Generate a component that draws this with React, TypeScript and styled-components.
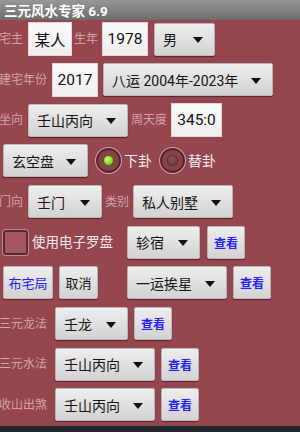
import React from "react";
import styled, { createGlobalStyle } from "styled-components";

const GlobalStyle = createGlobalStyle`
  html, body {
    margin: 0;
    padding: 0;
    background: #23272b;
  }
  * {
    box-sizing: border-box;
  }
`;

const FONT = `"Roboto", "Noto Sans CJK SC", sans-serif`;

const Page = styled.div`
  width: 300px;
  height: 432px;
  display: flex;
  flex-direction: column;
  overflow: hidden;
  background: #96464f;
  font-family: ${FONT};
`;

const TitleBar = styled.div`
  height: 20px;
  flex: none;
  display: flex;
  align-items: center;
  padding-left: 4px;
  background: linear-gradient(#979797, #6c6c6c);
  color: #ffffff;
  font-size: 13.5px;
  font-weight: bold;
  white-space: nowrap;
`;

const Content = styled.div`
  flex: 1;
  display: flex;
  flex-direction: column;
  gap: 6.67px;
  padding-top: 2px;
`;

const BottomBar = styled.div`
  height: 6px;
  flex: none;
  background: #23272b;
`;

const Row = styled.div`
  display: flex;
  align-items: center;
  height: 34px;
  white-space: nowrap;
`;

const Label = styled.span<{ $ml?: number }>`
  margin-left: ${(p) => p.$ml ?? 0}px;
  color: #d3a2aa;
  font-size: 12px;
  line-height: 16px;
`;

const WhiteText = styled.span<{ $ml?: number; $size?: number }>`
  margin-left: ${(p) => p.$ml ?? 0}px;
  color: #f4eaec;
  font-size: ${(p) => p.$size ?? 14}px;
  line-height: 16px;
`;

const Edit = styled.div<{ $w: number; $ml?: number }>`
  width: ${(p) => p.$w}px;
  height: 34px;
  margin-left: ${(p) => p.$ml ?? 0}px;
  display: flex;
  align-items: center;
  justify-content: center;
  background: linear-gradient(#fbfafa, #efeded);
  border: 1px solid #e2d6d8;
  color: #111;
  font-size: 15.5px;
`;

const Spinner = styled.div<{ $w: number; $ml?: number }>`
  width: ${(p) => p.$w}px;
  height: 33px;
  margin-left: ${(p) => p.$ml ?? 0}px;
  display: flex;
  align-items: center;
  justify-content: space-between;
  padding: 0 11px 0 8px;
  background: linear-gradient(#efeeee, #d3d1d1);
  border: 1px solid #bdb6b7;
  border-radius: 2px;
  box-shadow: 0 1px 1px rgba(40, 10, 15, 0.55);
  color: #141414;
  font-size: 14px;
`;

const Arrow = styled.span`
  width: 0;
  height: 0;
  margin-top: 2px;
  border-left: 5px solid transparent;
  border-right: 5px solid transparent;
  border-top: 6px solid #111;
`;

const Button = styled.div<{ $w: number; $ml?: number; $blue?: boolean; $bold?: boolean }>`
  width: ${(p) => p.$w}px;
  height: 33px;
  margin-left: ${(p) => p.$ml ?? 0}px;
  display: flex;
  align-items: center;
  justify-content: center;
  background: linear-gradient(#efeeee, #d3d1d1);
  border: 1px solid #bdb6b7;
  border-radius: 2px;
  box-shadow: 0 1px 1px rgba(40, 10, 15, 0.55);
  color: ${(p) => (p.$blue ? "#2222ee" : "#141414")};
  font-size: ${(p) => (p.$bold ? 12 : 13)}px;
  font-weight: ${(p) => (p.$bold ? "bold" : "normal")};
`;

const Radio = styled.div<{ $ml?: number; $checked?: boolean }>`
  width: 25px;
  height: 25px;
  margin-left: ${(p) => p.$ml ?? 0}px;
  flex: none;
  border-radius: 50%;
  border: 2px solid #4e252b;
  box-shadow: 0 0 0 1px #d6a1a9;
  background: #8b3f49;
  display: flex;
  align-items: center;
  justify-content: center;

  &::after {
    content: "";
    width: 9px;
    height: 9px;
    border-radius: 50%;
    background: ${(p) =>
      p.$checked
        ? "radial-gradient(circle at 40% 35%, #c8ff70, #86d820 60%, #5a9a18)"
        : "radial-gradient(circle at 40% 35%, #8a5058, #6a343b)"};
    box-shadow: 0 0 0 1px ${(p) => (p.$checked ? "#4a6a20" : "#5a2a31")};
  }
`;

const Checkbox = styled.div<{ $ml?: number }>`
  width: 25px;
  height: 25px;
  margin-left: ${(p) => p.$ml ?? 0}px;
  flex: none;
  border-radius: 3px;
  border: 2px solid #5a2930;
  box-shadow: 0 0 0 1px #c48a93;
  background: #a65963;
`;

const Select: React.FC<{ w: number; ml?: number; children: React.ReactNode }> = ({ w, ml, children }) => (
  <Spinner $w={w} $ml={ml}>
    <span>{children}</span>
    <Arrow />
  </Spinner>
);

export default function App() {
  return (
    <>
      <GlobalStyle />
      <Page>
        <TitleBar>三元风水专家 6.9</TitleBar>
        <Content>
          <Row>
            <Label $ml={-1}>宅主</Label>
            <Edit $w={44} $ml={5}>某人</Edit>
            <Label $ml={2}>生年</Label>
            <Edit $w={46} $ml={4}>1978</Edit>
            <Select w={61} ml={6}>男</Select>
          </Row>
          <Row>
            <Label $ml={-1}>建宅年份</Label>
            <Edit $w={46} $ml={5}>2017</Edit>
            <Select w={170} ml={5}>八运 2004年-2023年</Select>
          </Row>
          <Row>
            <Label $ml={-1}>坐向</Label>
            <Select w={100} ml={5}>壬山丙向</Select>
            <Label $ml={3}>周天度</Label>
            <Edit $w={51} $ml={4}>345:0</Edit>
          </Row>
          <Row>
            <Select w={85} ml={3}>玄空盘</Select>
            <Radio $ml={8} $checked />
            <WhiteText $ml={3}>下卦</WhiteText>
            <Radio $ml={8} />
            <WhiteText $ml={3}>替卦</WhiteText>
          </Row>
          <Row>
            <Label $ml={-1}>门向</Label>
            <Select w={74} ml={5}>壬门</Select>
            <Label $ml={3}>类别</Label>
            <Select w={100} ml={4}>私人别墅</Select>
          </Row>
          <Row>
            <Checkbox $ml={3} />
            <WhiteText $ml={4} $size={13.5}>使用电子罗盘</WhiteText>
            <Select w={73} ml={14}>轸宿</Select>
            <Button $w={38} $ml={7} $blue $bold>查看</Button>
          </Row>
          <Row>
            <Button $w={50} $ml={3} $blue>布宅局</Button>
            <Button $w={39} $ml={6}>取消</Button>
            <Select w={100} ml={29}>一运挨星</Select>
            <Button $w={38} $ml={6} $blue $bold>查看</Button>
          </Row>
          <Row>
            <Label $ml={-1}>三元龙法</Label>
            <Select w={73} ml={8}>壬龙</Select>
            <Button $w={38} $ml={6} $blue $bold>查看</Button>
          </Row>
          <Row>
            <Label $ml={-1}>三元水法</Label>
            <Select w={100} ml={8}>壬山丙向</Select>
            <Button $w={38} $ml={6} $blue $bold>查看</Button>
          </Row>
          <Row>
            <Label $ml={-1}>收山出煞</Label>
            <Select w={100} ml={8}>壬山丙向</Select>
            <Button $w={38} $ml={6} $blue $bold>查看</Button>
          </Row>
        </Content>
        <BottomBar />
      </Page>
    </>
  );
}
